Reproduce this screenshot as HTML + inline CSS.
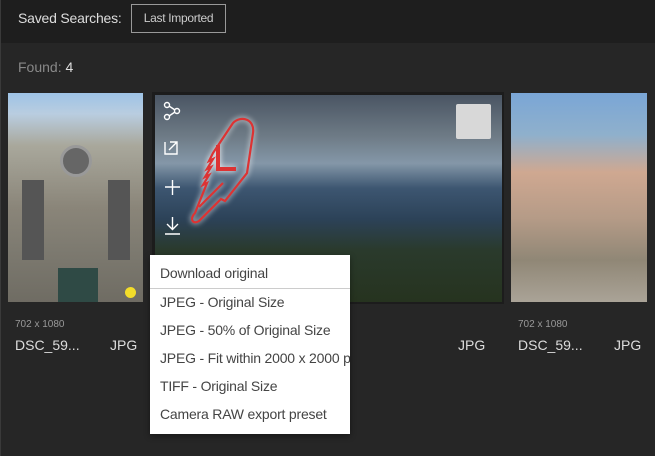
<!DOCTYPE html>
<html><head><style>
*{margin:0;padding:0;box-sizing:border-box}
body{width:655px;height:456px;background:#262626;font-family:"Liberation Sans",sans-serif;position:relative;overflow:hidden;color:#ddd}
.top{position:absolute;left:0;top:0;width:655px;height:43px;background:#1e1e1e}
.abs{position:absolute}
.menu{position:absolute;left:150px;top:255px;width:200px;height:179px;background:#fff;color:#444;font-size:14px;letter-spacing:-0.2px;overflow:hidden;box-shadow:0 2px 6px rgba(0,0,0,.4)}
.menu div{position:absolute;left:10px;white-space:nowrap}
</style></head><body>
<div class="top"></div>
<div class="abs" style="left:0;top:0;width:1px;height:456px;background:#3a3a3a"></div>
<div class="abs" style="left:18px;top:10px;font-size:14px;color:#ddd;letter-spacing:-0.2px">Saved Searches:</div>
<div class="abs" style="left:131px;top:4px;width:95px;height:29px;border:1px solid #999;font-size:12px;color:#ccc;line-height:27px;text-align:center;letter-spacing:-0.3px">Last Imported</div>
<div class="abs" style="left:18px;top:59px;font-size:14px;color:#888">Found: <span style="color:#ddd">4</span></div>

<div class="abs" style="left:8px;top:93px;width:135px;height:209px;background:linear-gradient(180deg,#9ec3e6 0%,#b9cde0 10%,#a9a89c 25%,#8a8579 55%,#7d7a70 75%,#6f6c63 100%)"></div>
<div class="abs" style="left:58px;top:268px;width:40px;height:34px;background:#2f4a45"></div>
<div class="abs" style="left:22px;top:180px;width:22px;height:80px;background:#555"></div>
<div class="abs" style="left:108px;top:180px;width:22px;height:80px;background:#555"></div>
<div class="abs" style="left:60px;top:145px;width:32px;height:32px;border-radius:50%;background:#666;border:3px solid #999"></div>
<div class="abs" style="left:125px;top:287px;width:11px;height:11px;border-radius:50%;background:#f3dd2a"></div>

<div class="abs" style="left:152px;top:92px;width:352px;height:212px;background:#1c1c1c"></div>
<div class="abs" style="left:155px;top:95px;width:347px;height:207px;background:linear-gradient(180deg,#4a5563 0%,#6e7b86 20%,#8497a8 33%,#3d5671 45%,#2c4258 60%,#2a3a2c 75%,#26331f 100%)"></div>
<div class="abs" style="left:456px;top:104px;width:35px;height:35px;background:#d8d8d8;border-radius:2px"></div>
<svg class="abs" style="left:155px;top:95px" width="200" height="150" fill="none" stroke="#fff" stroke-width="1.4">
<circle cx="12" cy="10" r="2.5"/><circle cx="22" cy="16" r="2.5"/><circle cx="12" cy="22" r="2.5"/><path d="M14 11l6 4M14 21l6-4"/>
<path d="M10 47v12h12v-5M15 47h7v7M22 47l-8 8"/>
<path d="M10 92h15M17.5 85v15"/>
<path d="M17.5 122v12M12 129l5.5 5.5 5.5-5.5M10 139h15"/>
<g style="filter:drop-shadow(0 0 3px #fff)" stroke="#d33" stroke-width="2.2">
<path d="M40 118c-6 6-2 12 4 8l22-22 4 2 22-28 6-40c2-14-12-18-20-10L58 58l-4 8 4-2-6 10 4-2-6 10 4-2-6 10 4-2z"/>
<path d="M44 112l24-24"/>
<path d="M63 50v24h18" stroke-width="4"/>
</g>
</svg>

<div class="abs" style="left:511px;top:93px;width:136px;height:209px;background:linear-gradient(180deg,#7aa6d6 0%,#8fb0cc 20%,#cfa891 38%,#b59b87 60%,#908776 80%,#aaa397 100%)"></div>

<div class="abs" style="left:15px;top:319px;font-size:10px;color:#999">702 x 1080</div>
<div class="abs" style="left:15px;top:337px;font-size:14px;color:#ddd">DSC_59...</div>
<div class="abs" style="left:110px;top:337px;font-size:14px;color:#ddd">JPG</div>
<div class="abs" style="left:458px;top:337px;font-size:14px;color:#ddd">JPG</div>
<div class="abs" style="left:518px;top:319px;font-size:10px;color:#999">702 x 1080</div>
<div class="abs" style="left:518px;top:337px;font-size:14px;color:#ddd">DSC_59...</div>
<div class="abs" style="left:614px;top:337px;font-size:14px;color:#ddd">JPG</div>

<div class="menu">
<div style="top:10px">Download original</div>
<div style="left:0;top:33px;width:200px;height:1px;background:#ccc"></div>
<div style="top:39px">JPEG - Original Size</div>
<div style="top:67px">JPEG - 50% of Original Size</div>
<div style="top:95px">JPEG - Fit within 2000 x 2000 px</div>
<div style="top:123px">TIFF - Original Size</div>
<div style="top:151px">Camera RAW export preset</div>
</div>
</body></html>
